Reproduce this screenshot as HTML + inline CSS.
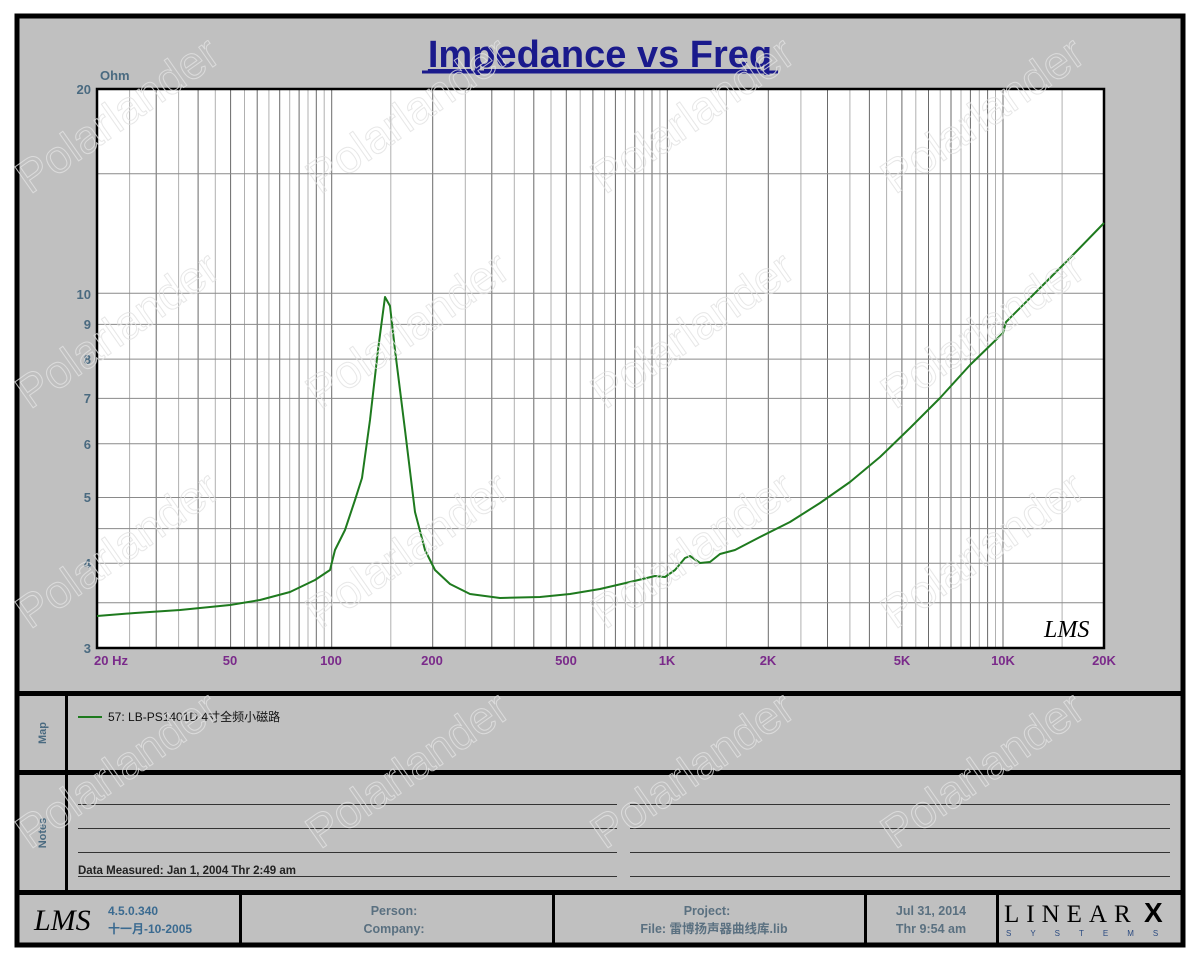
<!DOCTYPE html>
<html><head><meta charset="utf-8"><style>
html,body{margin:0;padding:0;background:#fff;width:1200px;height:960px;overflow:hidden}
svg{display:block}
text{font-family:"Liberation Sans","Noto Sans CJK SC",sans-serif}
</style></head><body>
<svg width="1200" height="960" viewBox="0 0 1200 960" xmlns="http://www.w3.org/2000/svg">
<rect x="17" y="16" width="1166" height="929" fill="#c0c0c0" stroke="#000" stroke-width="5"/>
<!-- section dividers -->
<rect x="17" y="691" width="1166" height="5" fill="#000"/>
<rect x="17" y="770" width="1166" height="5" fill="#000"/>
<rect x="17" y="890" width="1166" height="5" fill="#000"/>
<rect x="65" y="694" width="3" height="198" fill="#000"/>
<rect x="239" y="893" width="3" height="50" fill="#000"/>
<rect x="552" y="893" width="3" height="50" fill="#000"/>
<rect x="864" y="893" width="3" height="50" fill="#000"/>
<rect x="996" y="893" width="3" height="50" fill="#000"/>

<!-- title -->
<text x="600" y="67" text-anchor="middle" font-size="38" font-weight="bold" fill="#1a1a8c" text-decoration="underline">Impedance vs Freq</text>
<line x1="422" y1="72" x2="778" y2="72" stroke="#1a1a8c" stroke-width="3"/>

<!-- plot -->
<rect x="97" y="89" width="1007" height="559" fill="#fff"/>
<path fill="none" stroke="#b0b0b0" stroke-width="1" d="M129.6 89V648M178.6 89V648M215.3 89V648M244.5 89V648M268.9 89V648M289.7 89V648M308 89V648M324.2 89V648M390.8 89V648M465.3 89V648M514.3 89V648M551 89V648M580.2 89V648M604.6 89V648M625.4 89V648M643.7 89V648M659.9 89V648M726.4 89V648M800.9 89V648M849.9 89V648M886.6 89V648M915.8 89V648M940.2 89V648M961 89V648M979.3 89V648M995.5 89V648M1062.1 89V648"/>
<path fill="none" stroke="#6a6a6a" stroke-width="1" d="M156.2 89V648M198.1 89V648M230.6 89V648M257.2 89V648M279.7 89V648M299.1 89V648M316.3 89V648M331.7 89V648M432.7 89V648M491.8 89V648M533.8 89V648M566.3 89V648M592.9 89V648M615.4 89V648M634.8 89V648M652 89V648M667.3 89V648M768.3 89V648M827.5 89V648M869.4 89V648M901.9 89V648M928.5 89V648M951 89V648M970.4 89V648M987.6 89V648M1003 89V648"/>
<path fill="none" stroke="#8a8a8a" stroke-width="1" d="M97 173.7H1104M97 293.3H1104M97 324.4H1104M97 359.1H1104M97 398.4H1104M97 443.8H1104M97 497.5H1104M97 528.6H1104M97 563.3H1104M97 602.7H1104"/>
<rect x="97" y="89" width="1007" height="559" fill="none" stroke="#000" stroke-width="2.5"/>

<!-- curve -->
<polyline fill="none" stroke="#1e7a1e" stroke-width="2" stroke-linejoin="round" points="97,616 135,613 180,610 230,605 260,600 290,592 315,580 330,570 335,550 345,530 355,500 362,478 370,420 378,350 385,297 390,306 395,350 405,430 415,512 425,550 435,570 450,584 470,594 500,598 540,597 570,594 600,589 630,582 655,576 665,577 675,570 685,558 690,556 700,563 710,562 720,554 735,550 760,537 790,522 820,503 850,482 880,457 910,428 940,398 970,365 1003,333 1006,322 1040,288 1070,258 1104,223"/>

<!-- LMS logo in plot -->
<text x="1044" y="637" font-size="24" font-style="italic" font-family="Liberation Serif,serif" fill="#000" style="font-family:'Liberation Serif',serif">LMS</text>

<!-- y labels -->
<g font-size="13" font-weight="bold" fill="#4a6a80" text-anchor="end">
<text x="91" y="94">20</text><text x="91" y="299">10</text><text x="91" y="329">9</text><text x="91" y="364">8</text><text x="91" y="403">7</text><text x="91" y="449">6</text><text x="91" y="502">5</text><text x="91" y="568">4</text><text x="91" y="653">3</text>
</g>
<text x="100" y="80" font-size="13" font-weight="bold" fill="#4a6a80">Ohm</text>
<!-- x labels -->
<g font-size="13" font-weight="bold" fill="#7a2a8a" text-anchor="middle">
<text x="111" y="665">20  Hz</text><text x="230" y="665">50</text><text x="331" y="665">100</text><text x="432" y="665">200</text><text x="566" y="665">500</text><text x="667" y="665">1K</text><text x="768" y="665">2K</text><text x="902" y="665">5K</text><text x="1003" y="665">10K</text><text x="1104" y="665">20K</text>
</g>

<!-- map -->
<text transform="translate(46,733) rotate(-90)" text-anchor="middle" font-size="11" font-weight="bold" fill="#4a6a80">Map</text>
<line x1="78" y1="717" x2="102" y2="717" stroke="#1e7a1e" stroke-width="2"/>
<text x="108" y="721" font-size="12" fill="#111">57: LB-PS1401D 4寸全频小磁路</text>

<!-- notes -->
<text transform="translate(46,833) rotate(-90)" text-anchor="middle" font-size="11" font-weight="bold" fill="#4a6a80">Notes</text>
<path stroke="#333" stroke-width="1" d="M78 804.5H617M78 828.5H617M78 852.5H617M78 876.5H617M630 804.5H1170M630 828.5H1170M630 852.5H1170M630 876.5H1170"/>
<text x="78" y="874" font-size="11.5" font-weight="bold" fill="#222">Data Measured: Jan  1, 2004  Thr  2:49 am</text>

<!-- footer -->
<text x="34" y="930" font-size="30" font-style="italic" fill="#000" style="font-family:'Liberation Serif',serif">LMS</text>
<g font-size="12" font-weight="bold" fill="#3a6a90">
<text x="108" y="915">4.5.0.340</text><text x="108" y="933">十一月-10-2005</text>
</g>
<g font-size="12.5" font-weight="bold" fill="#5a7080" text-anchor="middle">
<text x="394" y="915">Person:</text><text x="394" y="933">Company:</text>
<text x="707" y="915">Project:</text><text x="714" y="933">File: 雷博扬声器曲线库.lib</text>
<text x="931" y="915">Jul 31, 2014</text><text x="931" y="933">Thr  9:54 am</text>
</g>
<text x="1004" y="922" font-size="25" fill="#000" letter-spacing="7" style="font-family:'Liberation Serif',serif">LINEAR</text>
<text x="1144" y="922" font-size="28" font-weight="bold" fill="#000">X</text>
<text x="1006" y="936" font-size="8" fill="#2a4a80" letter-spacing="19">SYSTEMS</text>

<!-- watermarks -->
<g font-size="46" fill="none" stroke="#e2e2e2" stroke-width="1" opacity="0.8">
<text transform="translate(30,195) rotate(-35)">Polarlander</text>
<text transform="translate(320,195) rotate(-35)">Polarlander</text>
<text transform="translate(605,195) rotate(-35)">Polarlander</text>
<text transform="translate(895,195) rotate(-35)">Polarlander</text>
<text transform="translate(30,410) rotate(-35)">Polarlander</text>
<text transform="translate(320,410) rotate(-35)">Polarlander</text>
<text transform="translate(605,410) rotate(-35)">Polarlander</text>
<text transform="translate(895,410) rotate(-35)">Polarlander</text>
<text transform="translate(30,630) rotate(-35)">Polarlander</text>
<text transform="translate(320,630) rotate(-35)">Polarlander</text>
<text transform="translate(605,630) rotate(-35)">Polarlander</text>
<text transform="translate(895,630) rotate(-35)">Polarlander</text>
<text transform="translate(30,850) rotate(-35)">Polarlander</text>
<text transform="translate(320,850) rotate(-35)">Polarlander</text>
<text transform="translate(605,850) rotate(-35)">Polarlander</text>
<text transform="translate(895,850) rotate(-35)">Polarlander</text>
</g>
</svg>
</body></html>
